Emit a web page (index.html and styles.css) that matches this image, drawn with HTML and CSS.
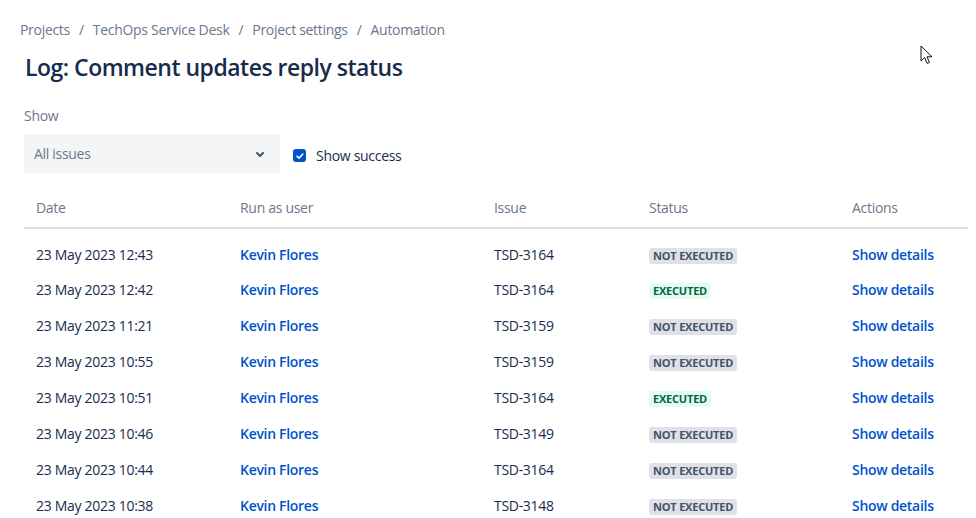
FILE: index.html
```html
<!DOCTYPE html>
<html>
<head>
<meta charset="utf-8">
<link rel="stylesheet" href="styles.css">
</head>
<body>
<div class="page">
  <nav class="crumbs">
    <span>Projects</span><span class="sep">/</span>
    <span>TechOps Service Desk</span><span class="sep">/</span>
    <span>Project settings</span><span class="sep">/</span>
    <span>Automation</span>
  </nav>
  <h1 class="title">Log: Comment updates reply status</h1>
  <div class="label">Show</div>
  <div class="filters">
    <div class="select">
      <span>All issues</span>
      <svg class="chev" width="24" height="24" viewBox="0 0 24 24"><path d="M8.3 10.3a1 1 0 0 1 1.4 0L12 12.6l2.3-2.3a1 1 0 1 1 1.4 1.4l-3 3a1 1 0 0 1-1.4 0l-3-3a1 1 0 0 1 0-1.4z" fill="#42526E"/></svg>
    </div>
    <label class="check">
      <span class="box"><svg width="14" height="14" viewBox="0 0 14 14"><path d="M3.5 7.2l2.3 2.3 4.5-4.8" fill="none" stroke="#fff" stroke-width="1.8" stroke-linecap="round" stroke-linejoin="round"/></svg></span>
      <span>Show success</span>
    </label>
  </div>
  <table class="log">
    <thead>
      <tr><th class="c1">Date</th><th class="c2">Run as user</th><th class="c3">Issue</th><th class="c4">Status</th><th class="c5">Actions</th></tr>
    </thead>
    <tbody>
      <tr><td>23 May 2023 12:43</td><td><a>Kevin Flores</a></td><td>TSD-3164</td><td><span class="loz">NOT EXECUTED</span></td><td><a>Show details</a></td></tr>
      <tr><td>23 May 2023 12:42</td><td><a>Kevin Flores</a></td><td>TSD-3164</td><td><span class="loz ok">EXECUTED</span></td><td><a>Show details</a></td></tr>
      <tr><td>23 May 2023 11:21</td><td><a>Kevin Flores</a></td><td>TSD-3159</td><td><span class="loz">NOT EXECUTED</span></td><td><a>Show details</a></td></tr>
      <tr><td>23 May 2023 10:55</td><td><a>Kevin Flores</a></td><td>TSD-3159</td><td><span class="loz">NOT EXECUTED</span></td><td><a>Show details</a></td></tr>
      <tr><td>23 May 2023 10:51</td><td><a>Kevin Flores</a></td><td>TSD-3164</td><td><span class="loz ok">EXECUTED</span></td><td><a>Show details</a></td></tr>
      <tr><td>23 May 2023 10:46</td><td><a>Kevin Flores</a></td><td>TSD-3149</td><td><span class="loz">NOT EXECUTED</span></td><td><a>Show details</a></td></tr>
      <tr><td>23 May 2023 10:44</td><td><a>Kevin Flores</a></td><td>TSD-3164</td><td><span class="loz">NOT EXECUTED</span></td><td><a>Show details</a></td></tr>
      <tr><td>23 May 2023 10:38</td><td><a>Kevin Flores</a></td><td>TSD-3148</td><td><span class="loz">NOT EXECUTED</span></td><td><a>Show details</a></td></tr>
    </tbody>
  </table>
</div>
<svg class="cursor" width="14" height="22" viewBox="0 0 14 22"><path d="M1 1v15l3.6-3.4 2.6 5.8 2.3-1-2.5-5.6H12z" fill="#fff" stroke="#111" stroke-width="1" stroke-linejoin="round"/></svg>
</body>
</html>
```
FILE: styles.css
```css
html, body { margin: 0; padding: 0; background: #fff; }
body {
  font-family: "Open Sans", "Noto Sans", "Liberation Sans", sans-serif;
  color: #172B4D;
  font-size: 14px;
  letter-spacing: -0.3px;
  width: 976px;
  height: 518px;
  overflow: hidden;
  position: relative;
}
.page { padding: 20px 8px 0 24px; }
.crumbs {
  margin-left: -4px;
  color: #6B778C;
  font-size: 14px;
  line-height: 20px;
  display: flex;
}
.crumbs .sep { margin: 0 9px; }
.title {
  margin: 13px 0 0 1px;
  font-size: 23px;
  line-height: 28px;
  font-weight: 600;
  color: #172B4D;
  letter-spacing: -0.5px;
}
.label {
  margin-top: 25px;
  color: #6B778C;
  font-size: 14px;
  line-height: 20px;
}
.filters {
  margin-top: 8px;
  display: flex;
  align-items: center;
  gap: 13px;
}
.select {
  width: 256px;
  height: 39px;
  box-sizing: border-box;
  background: #F4F5F7;
  border-radius: 3px;
  display: flex;
  align-items: center;
  justify-content: space-between;
  padding: 0 8px 0 10px;
  color: #6B778C;
}
.check { display: flex; align-items: center; gap: 10px; color: #172B4D; margin-top: 4px; }
.box {
  width: 13px; height: 13px; border-radius: 3px; background: #0052CC;
  display: flex; align-items: center; justify-content: center;
}
.box svg { width: 12px; height: 12px; }
.log {
  margin-top: 15px;
  width: 944px;
  border-collapse: collapse;
  table-layout: fixed;
}
.log th, .log td { box-sizing: border-box; }
.log th {
  text-align: left;
  font-weight: 400;
  color: #6B778C;
  font-size: 14px;
  line-height: 20px;
  padding: 9px 12px 9px;
  height: 40px;
  border-bottom: 2px solid #DFE1E6;
}
.c1 { width: 204px; } .c2 { width: 254px; } .c3 { width: 155px; } .c4 { width: 203px; } .c5 { width: 128px; }
.log td {
  padding: 0 12px;
  height: 36px;
  line-height: 20px;
  vertical-align: middle;
  white-space: nowrap;
}
.log tbody tr:first-child td { padding-top: 8px; height: 44px; }
.log a { color: #0052CC; font-weight: 600; }
.loz {
  display: inline-block;
  font-size: 11px;
  font-weight: 700;
  line-height: 16px;
  padding: 0 4px;
  border-radius: 3px;
  background: #DFE1E6;
  color: #42526E;
  vertical-align: middle;
  letter-spacing: -0.2px;
}
.loz.ok { background: #E3FCEF; color: #006644; }
.cursor { position: absolute; left: 920px; top: 45px; }
```
